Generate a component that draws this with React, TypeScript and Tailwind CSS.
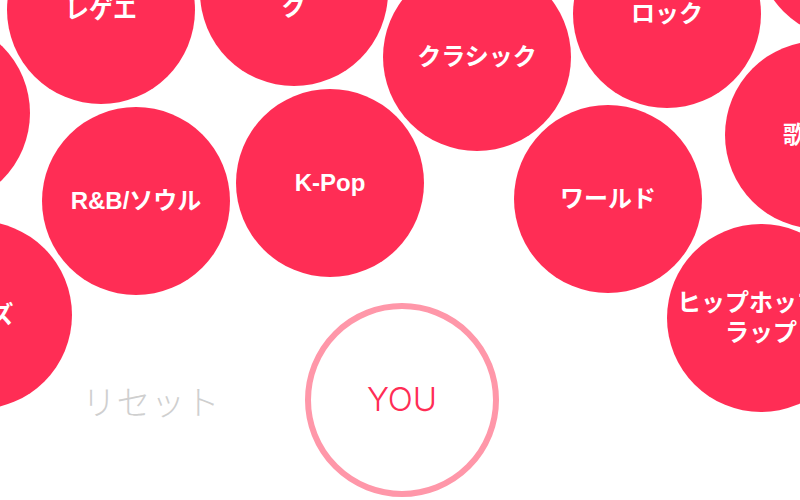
type Bubble = { lines: string[]; pos: string };

// every bubble is 188px across; pos puts it on the canvas
const bubbles: Bubble[] = [
  { lines: ["ソングライティン", "グ"], pos: "left-[200px] top-[-102px]" },
  { lines: ["レゲエ"], pos: "left-[7px] top-[-84px]" },
  { lines: ["ポップ"], pos: "left-[-158px] top-[19px]" },
  { lines: ["R&B/ソウル"], pos: "left-[42px] top-[107px]" },
  { lines: ["K-Pop"], pos: "left-[236px] top-[89px]" },
  { lines: ["クラシック"], pos: "left-[383px] top-[-37px]" },
  { lines: ["ロック"], pos: "left-[573px] top-[-80px]" },
  { lines: ["ダンス"], pos: "left-[756px] top-[-149px]" },
  { lines: ["歌謡曲"], pos: "left-[725px] top-[41px]" },
  { lines: ["ワールド"], pos: "left-[514px] top-[105px]" },
  { lines: ["ヒップホップ／", "ラップ"], pos: "left-[667px] top-[224px]" },
  { lines: ["ジャズ"], pos: "left-[-116px] top-[221px]" },
];

function GenreBubble({ b }: { b: Bubble }) {
  return (
    <div
      className={`absolute ${b.pos} w-[188px] h-[188px] rounded-full bg-[#ff2d55] flex flex-col items-center justify-center text-white text-[24px] font-bold leading-[30px] text-center`}
    >
      {b.lines.map((l) => (
        <span key={l} className="whitespace-nowrap">
          {l}
        </span>
      ))}
    </div>
  );
}

export default function App() {
  return (
    <div className="relative w-[800px] h-[500px] overflow-hidden bg-white font-['Liberation_Sans','Noto_Sans_CJK_JP',sans-serif]">
      {bubbles.map((b, i) => (
        <GenreBubble key={i} b={b} />
      ))}

      <div className="absolute left-0 bottom-0 w-full h-[200px] flex items-center pl-[82px] gap-[85px]">
        <span className="text-[34px] font-light text-[#cfcfcf] tracking-[0.5px] whitespace-nowrap font-['Noto_Sans_CJK_JP',sans-serif]">
          リセット
        </span>
        <button className="w-[194px] h-[194px] rounded-full border-[6px] border-[#ff97a9] bg-white flex items-center justify-center">
          <span className="text-[33px] font-light text-[#ff2d55] font-['Inter',sans-serif]">
            YOU
          </span>
        </button>
      </div>
    </div>
  );
}
